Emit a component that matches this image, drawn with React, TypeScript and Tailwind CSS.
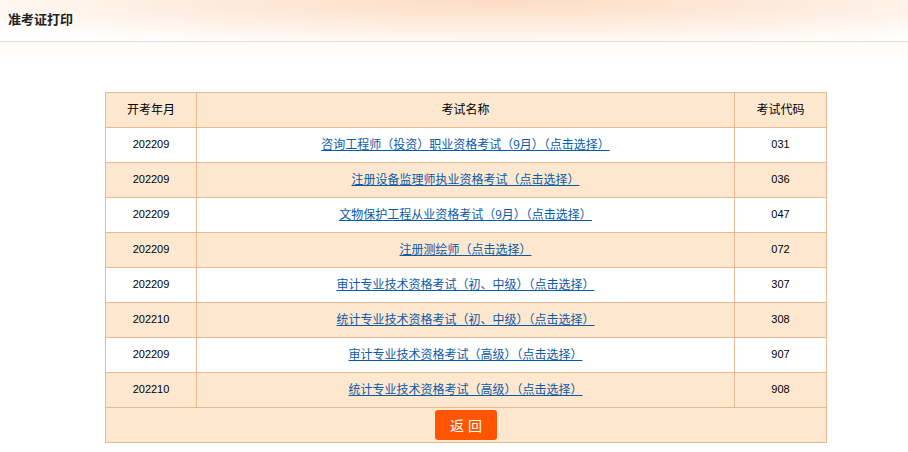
import React from "react";

const rows = [
  ["202209", "咨询工程师（投资）职业资格考试（9月）（点击选择）", "031"],
  ["202209", "注册设备监理师执业资格考试（点击选择）", "036"],
  ["202209", "文物保护工程从业资格考试（9月）（点击选择）", "047"],
  ["202209", "注册测绘师（点击选择）", "072"],
  ["202209", "审计专业技术资格考试（初、中级）（点击选择）", "307"],
  ["202210", "统计专业技术资格考试（初、中级）（点击选择）", "308"],
  ["202209", "审计专业技术资格考试（高级）（点击选择）", "907"],
  ["202210", "统计专业技术资格考试（高级）（点击选择）", "908"],
];

const num = { fontFamily: '"Liberation Sans", Arial, sans-serif' };

export default function App() {
  return (
    <div
      className="w-[908px] h-[452px] bg-white text-[12px] text-black overflow-hidden"
      style={{ fontFamily: '"Noto Sans CJK SC", "Noto Sans", sans-serif' }}
    >
      <div className="h-[42px] border-b border-[#e6dbd0] bg-[radial-gradient(ellipse_70%_120%_at_55%_0%,#fddcc2_0%,#feeadb_45%,#fff8f2_80%,#ffffff_100%)] flex items-center pl-[8px] pb-[3px]">
        <span className="font-bold text-[13px] text-[#222]">准考证打印</span>
      </div>
      <div className="h-[50px] bg-[linear-gradient(to_bottom,#fffbf8,#ffffff_40%)]" />
      <table className="ml-[105px] w-[722px] border-collapse border border-[#e8b990]">
        <thead>
          <tr className="h-[35px] bg-[#fde8cf]">
            <th className="w-[91px] border border-[#e8b990] font-normal text-[12px] pb-[2px]">开考年月</th>
            <th className="border border-[#e8b990] font-normal text-[12px] pb-[2px]">考试名称</th>
            <th className="w-[92px] border border-[#e8b990] font-normal text-[12px] pb-[2px]">考试代码</th>
          </tr>
        </thead>
        <tbody>
          {rows.map((r, i) => (
            <tr key={i} className={`h-[35px] ${i % 2 === 1 ? "bg-[#fde8cf]" : "bg-white"}`}>
              <td className="border border-[#e8b990] text-center text-[11px] text-black pb-[1px]" style={num}>{r[0]}</td>
              <td className="border border-[#e8b990] text-center pb-[3px]">
                <a href="#" className="text-[#0b5aa8] underline">{r[1]}</a>
              </td>
              <td className="border border-[#e8b990] text-center text-[11px] text-black pb-[1px]" style={num}>{r[2]}</td>
            </tr>
          ))}
          <tr className="h-[35px] bg-[#fde8cf]">
            <td colSpan={3} className="border border-[#e8b990] text-center align-middle">
              <button className="w-[62px] h-[30px] rounded-[3px] bg-[#ff5500] text-white text-[14px] tracking-[4px] pl-[4px] align-middle">返回</button>
            </td>
          </tr>
        </tbody>
      </table>
    </div>
  );
}
